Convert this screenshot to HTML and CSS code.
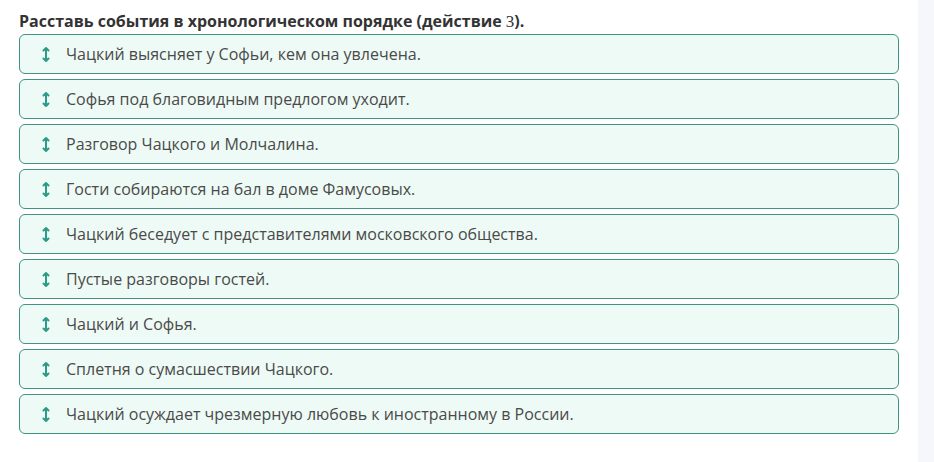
FILE: index.html
```html
<!DOCTYPE html>
<html lang="ru">

<head>
    <meta charset="UTF-8">
    <title>Хронологический порядок</title>
    <link rel="stylesheet" href="styles.css">
</head>

<body>
    <div id="page">
        <div id="task">
            <h2 class="question">Расставь события в хронологическом порядке (действие <span class="num">3</span>).</h2>
            <ul class="order-list">
                <li class="order-item"><svg class="drag" viewBox="0 0 8 17"><path d="M4 2v13M1.5 4.5 4 2 6.5 4.5M1.5 12.5 4 15 6.5 12.5"/></svg><span>Чацкий выясняет у Софьи, кем она увлечена.</span></li>
                <li class="order-item"><svg class="drag" viewBox="0 0 8 17"><path d="M4 2v13M1.5 4.5 4 2 6.5 4.5M1.5 12.5 4 15 6.5 12.5"/></svg><span>Софья под благовидным предлогом уходит.</span></li>
                <li class="order-item"><svg class="drag" viewBox="0 0 8 17"><path d="M4 2v13M1.5 4.5 4 2 6.5 4.5M1.5 12.5 4 15 6.5 12.5"/></svg><span>Разговор Чацкого и Молчалина.</span></li>
                <li class="order-item"><svg class="drag" viewBox="0 0 8 17"><path d="M4 2v13M1.5 4.5 4 2 6.5 4.5M1.5 12.5 4 15 6.5 12.5"/></svg><span>Гости собираются на бал в доме Фамусовых.</span></li>
                <li class="order-item"><svg class="drag" viewBox="0 0 8 17"><path d="M4 2v13M1.5 4.5 4 2 6.5 4.5M1.5 12.5 4 15 6.5 12.5"/></svg><span>Чацкий беседует с представителями московского общества.</span></li>
                <li class="order-item"><svg class="drag" viewBox="0 0 8 17"><path d="M4 2v13M1.5 4.5 4 2 6.5 4.5M1.5 12.5 4 15 6.5 12.5"/></svg><span>Пустые разговоры гостей.</span></li>
                <li class="order-item"><svg class="drag" viewBox="0 0 8 17"><path d="M4 2v13M1.5 4.5 4 2 6.5 4.5M1.5 12.5 4 15 6.5 12.5"/></svg><span>Чацкий и Софья.</span></li>
                <li class="order-item"><svg class="drag" viewBox="0 0 8 17"><path d="M4 2v13M1.5 4.5 4 2 6.5 4.5M1.5 12.5 4 15 6.5 12.5"/></svg><span>Сплетня о сумасшествии Чацкого.</span></li>
                <li class="order-item"><svg class="drag" viewBox="0 0 8 17"><path d="M4 2v13M1.5 4.5 4 2 6.5 4.5M1.5 12.5 4 15 6.5 12.5"/></svg><span>Чацкий осуждает чрезмерную любовь к иностранному в России.</span></li>
            </ul>
        </div>
        <div id="side"></div>
    </div>
</body>

</html>
```

FILE: styles.css
```css
* {
    margin: 0;
    padding: 0;
}

body {
    font-family: "Open Sans", "Noto Sans", sans-serif;
    background-color: #fff;
}

#page {
    display: flex;
    height: 462px;
}

#task {
    width: 918px;
    padding: 11px 19px 0 19px;
    box-sizing: border-box;
}

#side {
    flex: 1;
    background-color: #f5f7fa;
}

.question {
    font-size: 16px;
    line-height: 20px;
    font-weight: 700;
    color: #333;
    margin-bottom: 2px;
}

.question .num {
    font-family: "Liberation Serif", serif;
    font-weight: 400;
    font-size: 17px;
}

.order-list {
    list-style: none;
    display: flex;
    flex-direction: column;
    gap: 5px;
}

.order-item {
    display: flex;
    align-items: center;
    gap: 16px;
    height: 40px;
    padding-left: 22px;
    box-sizing: border-box;
    border: 1px solid #3f9482;
    border-radius: 6px;
    background-color: #eefaf5;
    font-size: 16px;
    color: #4a4a4a;
}

.drag {
    flex-shrink: 0;
    width: 8px;
    height: 17px;
    fill: none;
    stroke: #2b9a87;
    stroke-width: 2;
    stroke-linecap: round;
    stroke-linejoin: round;
}
```
